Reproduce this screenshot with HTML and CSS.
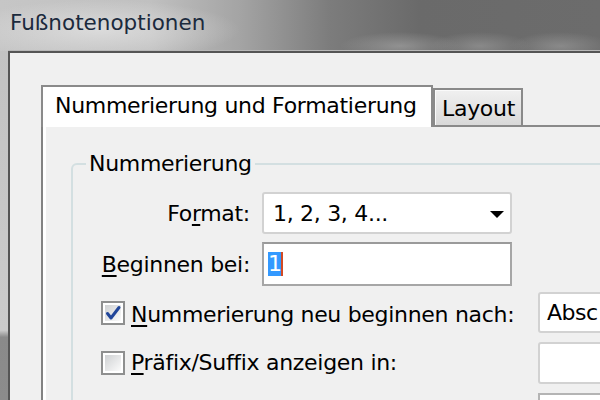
FILE: index.html
```html
<!DOCTYPE html>
<html lang="de">
<head>
<meta charset="utf-8">
<title>Fußnotenoptionen</title>
<link rel="stylesheet" href="styles.css">
</head>
<body>
<div class="window">
  <div class="titlebar"><span class="title">Fußnotenoptionen</span></div>
  <div class="frame">
    <div class="frame-edge"></div>
    <div class="dialog">
      <div class="tabs">
        <div class="tab active">Nummerierung und Formatierung</div>
        <div class="tab inactive">Layout</div>
        <div class="tab-fill"></div>
      </div>
      <div class="panel">
        <fieldset class="group">
          <legend>Nummerierung</legend>
          <div class="form">
            <label class="lbl">Fo<u>r</u>mat:</label>
            <div class="select">
              <span class="val">1, 2, 3, 4...</span>
              <svg class="arrow" width="14" height="7" viewBox="0 0 14 7"><path d="M0 0H14L7 7Z" fill="#000"/></svg>
            </div>
            <label class="lbl"><u>B</u>eginnen bei:</label>
            <div class="input"><span class="sel">1</span><span class="caret"></span></div>
          </div>
          <div class="checks">
            <div class="check">
              <svg class="box" width="24" height="24" viewBox="0 0 24 24">
                <defs>
                  <linearGradient id="cbg" x1="0" y1="0" x2="1" y2="1">
                    <stop offset="0" stop-color="#cfd1d3"/>
                    <stop offset="1" stop-color="#fbfbfb"/>
                  </linearGradient>
                </defs>
                <rect x="1" y="1" width="22" height="22" fill="#fff" stroke="#8e8f8f" stroke-width="2"/>
                <rect x="4" y="4" width="16" height="16" fill="url(#cbg)"/>
                <path d="M6.5 12.5L10 17L18 6.5" fill="none" stroke="#21469a" stroke-width="3" stroke-linecap="round" stroke-linejoin="round"/>
              </svg>
              <span class="ctext first"><u>N</u>ummerierung neu beginnen nach:</span>
            </div>
            <div class="select wide"><span class="val">Absc</span></div>
            <div class="check">
              <svg class="box" width="24" height="24" viewBox="0 0 24 24">
                <defs>
                  <linearGradient id="cbg2" x1="0" y1="0" x2="1" y2="1">
                    <stop offset="0" stop-color="#cfd1d3"/>
                    <stop offset="1" stop-color="#fbfbfb"/>
                  </linearGradient>
                </defs>
                <rect x="1" y="1" width="22" height="22" fill="#fff" stroke="#8e8f8f" stroke-width="2"/>
                <rect x="4" y="4" width="16" height="16" fill="url(#cbg2)"/>
              </svg>
              <span class="ctext"><u>P</u>räfix/Suffix anzeigen in:</span>
            </div>
            <div class="select wide"></div>
            <div></div>
            <div class="input wide"></div>
          </div>
        </fieldset>
      </div>
    </div>
  </div>
</div>
</body>
</html>
```

FILE: styles.css
```css
* { box-sizing: border-box; }

html, body {
  margin: 0;
  padding: 0;
  width: 600px;
  height: 400px;
  overflow: hidden;
}

body {
  font-family: "DejaVu Sans", "Noto Sans", sans-serif;
  font-size: 22px;
  letter-spacing: -0.3px;
  color: #000;
}

.window {
  width: 600px;
  height: 400px;
  display: flex;
  flex-direction: column;
}

.titlebar {
  height: 51px;
  flex: none;
  padding: 10px 0 0 10px;
  background:
    radial-gradient(ellipse 60px 14px at 400px 46px, rgba(160,160,160,0.7), rgba(160,160,160,0)),
    radial-gradient(ellipse 50px 14px at 480px 46px, rgba(150,150,150,0.7), rgba(150,150,150,0)),
    radial-gradient(ellipse 50px 14px at 560px 46px, rgba(150,150,150,0.7), rgba(150,150,150,0)),
    radial-gradient(ellipse 140px 30px at 100px 30px, rgba(225,225,225,0.8), rgba(225,225,225,0)),
    linear-gradient(to right, #c6c6c6 0%, #c0c0c0 25%, #a4a4a4 40%, #7c7c7c 55%, #6a6a6a 70%, #6c6c6c 100%);
}

.title {
  font-size: 21.5px;
  line-height: 26px;
  letter-spacing: 0;
  color: #1b2a3d;
}

.frame {
  flex: 1;
  display: flex;
  min-height: 0;
}

.frame-edge {
  width: 8px;
  flex: none;
  background: linear-gradient(to bottom, #c2c2c2 0%, #cbcbcb 80%, #8a8a8a 82%, #8c8c8c 100%);
}

.dialog {
  flex: 1;
  min-width: 0;
  background: #f0f0f0;
  border-top: 2px solid #555;
  border-left: 2px solid #555;
  box-shadow: 0 -1px 0 #b8b8b8;
  padding: 32px 0 0 31px;
  display: flex;
  flex-direction: column;
  overflow: hidden;
}

.tabs {
  display: flex;
  align-items: flex-end;
  height: 42px;
  flex: none;
}

.tab {
  border: 2px solid #8a8a8a;
  border-bottom: 0;
  line-height: 26px;
  white-space: nowrap;
  flex: none;
}

.tab.active {
  width: 392px;
  height: 42px;
  background: #fff;
  padding: 6px 0 0 12px;
}

.tab.inactive {
  width: 90px;
  height: 39px;
  border-bottom: 2px solid #8a8a8a;
  padding: 6px 0 0 7px;
  background: linear-gradient(to bottom, #f0f0f0 0%, #e6e6e6 45%, #d9d9d9 100%);
  box-shadow: inset 1px 1px 0 #fafafa;
}

.tab-fill {
  flex: 1;
  height: 2px;
  background: #8a8a8a;
}

.panel {
  flex: 1;
  background: #f0f0f0;
  border-left: 2px solid #828282;
  box-shadow: inset 3px 0 0 #fff;
  padding: 24px 0 0 28px;
  overflow: hidden;
}

.group {
  margin: 0;
  width: 700px;
  border: 2px solid #d3dfe1;
  border-radius: 6px;
  padding: 0 0 0 13px;
  min-inline-size: 0;
}

.group legend {
  padding: 0 3px;
  line-height: 26px;
}

.form {
  margin-top: 15px;
  display: grid;
  grid-template-columns: 164px 250px;
  grid-template-rows: 42px 44px;
  column-gap: 12px;
  row-gap: 8px;
  align-items: center;
}

.lbl {
  text-align: right;
  line-height: 26px;
  white-space: nowrap;
  padding-top: 1px;
}

u {
  text-decoration-thickness: 2px;
  text-underline-offset: 3px;
}

.select {
  height: 100%;
  background: #fff;
  border: 2px solid #d2d2d2;
  border-radius: 3px;
  display: flex;
  align-items: center;
  justify-content: space-between;
  padding: 0 6px 0 9px;
  line-height: 26px;
  white-space: nowrap;
  overflow: hidden;
}

.select .val {
  padding-top: 1px;
}

.arrow {
  flex: none;
  margin-top: 2px;
}

.input {
  height: 100%;
  background: #fff;
  border: 2px solid #a6a6a6;
  border-top-color: #9a9a9a;
  display: flex;
  align-items: center;
  padding-left: 4px;
}

.sel {
  width: 13px;
  height: 24px;
  background: #3399ff;
  color: #fff;
  line-height: 24px;
  text-align: center;
  letter-spacing: 0;
}

.caret {
  width: 2px;
  height: 24px;
  background: #d24a24;
}

.checks {
  margin-top: 6px;
  display: grid;
  grid-template-columns: 452px 200px;
  grid-template-rows: 41px 42px 42px;
  row-gap: 9px;
}

.check {
  display: flex;
  align-items: center;
  padding-left: 15px;
  gap: 6px;
  white-space: nowrap;
}

.box {
  flex: none;
  display: block;
}

.ctext {
  line-height: 26px;
}

.ctext.first {
  margin-top: 5px;
}

.select.wide {
  padding-left: 7px;
  letter-spacing: -0.5px;
}

.input.wide {
  border-color: #b4b4b4;
}
```
